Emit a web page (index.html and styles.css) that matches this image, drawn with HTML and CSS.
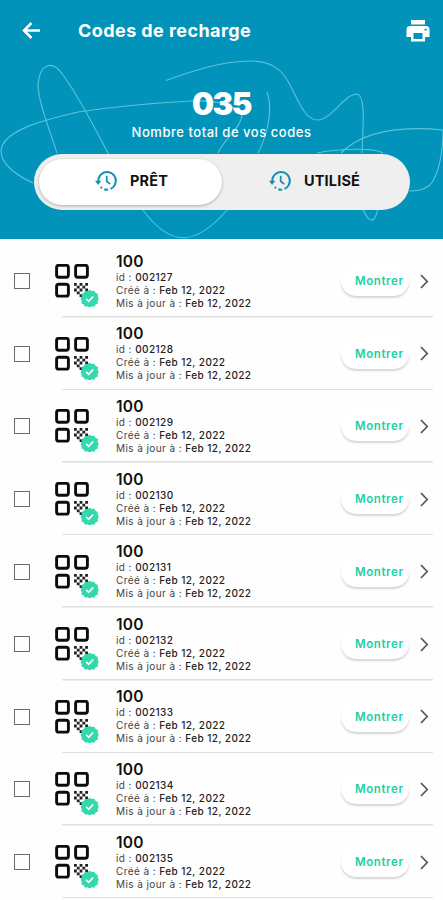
FILE: index.html
```
<!DOCTYPE html>
<html lang="fr">
<head>
<meta charset="utf-8">
<title>Codes de recharge</title>
<link rel="stylesheet" href="styles.css">
</head>
<body>
<svg class="defs" aria-hidden="true">
  <symbol id="history" viewBox="0 0 24 22">
    <path d="M3.400 12A9.200 9.200 0 1 1 6 17.800" fill="none" stroke="currentColor" stroke-width="2.100" stroke-dasharray="40 2.500 4 2.500 20"/>
    <path d="M0 11.200h6.600L3.200 15.600z" fill="currentColor"/>
    <path d="M12.200 6v5.800l3.600 3" fill="none" stroke="currentColor" stroke-width="1.800"/>
  </symbol>
  <symbol id="qr" viewBox="0 0 44 43">
    <g fill="none" stroke="#0c0c0c" stroke-width="2.900">
      <rect x="1.600" y="1.400" width="11.800" height="11.800" rx="2.200"/>
      <rect x="20.600" y="1.400" width="11.800" height="11.800" rx="2.200"/>
      <rect x="1.600" y="20.300" width="11.800" height="11.800" rx="2.200"/>
    </g>
    <path fill="#222" d="M19 19h2.800v2.800H19zM24.600 19h2.800v2.800h-2.800zM30.200 19H33v2.800h-2.800zM21.800 21.800h2.800v2.800h-2.800zM27.400 21.800h2.800v2.800h-2.800zM19 24.600h2.800v2.800H19zM24.600 24.600h2.800v2.800h-2.800zM30.200 24.600H33v2.800h-2.800zM21.800 27.400h2.800v2.800h-2.800zM24.600 30.200h2.800V33h-2.800z"/>
    <path fill="#34d8ad" d="M34.700 25.800l2.200 1.300 2.500-.4 1.200 2.200 2.300 1.100-.2 2.500 1.100 2.200-1.100 2.200.2 2.500-2.300 1.100-1.200 2.200-2.500-.4-2.200 1.300-2.200-1.300-2.500.4-1.200-2.200-2.300-1.100.2-2.500-1.100-2.200 1.100-2.200-.2-2.500 2.300-1.100 1.200-2.200 2.500.4z"/>
    <path d="M31.200 34.900l2.500 2.400 4.500-4.800" fill="none" stroke="#fff" stroke-width="1.700"/>
  </symbol>
  <symbol id="chevron" viewBox="0 0 9 15">
    <path d="M1 1l6.200 6.500L1 14" fill="none" stroke="#555" stroke-width="1.700"/>
  </symbol>
</svg>

<header class="header">
  <svg class="swirl" viewBox="0 0 443 239" aria-hidden="true">
    <path d="M166 80.500C192 71 222 61 250 61C270 61 281 68 289 83C300 104 305 119 317 120C332 120 344 94 357 94C366 96 363 125 362 153"/>
    <path d="M57 153C46 120 38 99 38 84C40 64 52 59 63 75C80 98 94 127 108 153C121 178 130 196 143 210C170 247 195 247 227 210"/>
    <path d="M33 183C13 174 1 162 1 151C2 128 57 117 78 112C118 106 155 103 191 101C220 100 236 105 242 116C240 129 224 139 218 153"/>
    <path d="M267 92C272 105 270 130 258 153"/>
    <path d="M317 153C335 149 374 147 383 153M341 153C360 134 392 125 443 130C443 151 439 175 430 185C422 191 415 191 409 191"/>
    <path d="M363 209C367 219 371 222 374 219Q377 214 378 209"/>
  </svg>
  <div class="bar">
    <svg class="back" viewBox="0 0 18 17"><path d="M9.500 1L2 8.500l7.500 7.500M2 8.500h16" fill="none" stroke="#fff" stroke-width="2.500"/></svg>
    <h1 class="title">Codes de recharge</h1>
    <svg class="printer" viewBox="0 0 24 22"><path fill="#fff" fill-rule="evenodd" d="M5 0h14v4.600H5zM4 6h16a3.500 3.500 0 0 1 3.500 3.500V17H19v4.500H5V17H.5V9.500A3.500 3.500 0 0 1 4 6zm3.500 7v6h9v-6zM18.500 8.800v1.800h2.200V8.800z"/></svg>
  </div>
  <div class="count">035</div>
  <div class="caption">Nombre total de vos codes</div>
  <nav class="tabs">
    <div class="tab active"><svg class="clock"><use href="#history"/></svg><span>PRÊT</span></div>
    <div class="tab"><svg class="clock"><use href="#history"/></svg><span>UTILISÉ</span></div>
  </nav>
</header>

<main class="list">
  <div class="row"><span class="check"></span><div class="item"><svg class="qr"><use href="#qr"/></svg><div class="info"><div class="amount">100</div><div class="line id">id : <b>002127</b></div><div class="line">Créé à : <b>Feb 12, 2022</b></div><div class="line">Mis à jour à : <b>Feb 12, 2022</b></div></div><span class="show">Montrer</span><svg class="chevron"><use href="#chevron"/></svg></div></div>
  <div class="row"><span class="check"></span><div class="item"><svg class="qr"><use href="#qr"/></svg><div class="info"><div class="amount">100</div><div class="line id">id : <b>002128</b></div><div class="line">Créé à : <b>Feb 12, 2022</b></div><div class="line">Mis à jour à : <b>Feb 12, 2022</b></div></div><span class="show">Montrer</span><svg class="chevron"><use href="#chevron"/></svg></div></div>
  <div class="row"><span class="check"></span><div class="item"><svg class="qr"><use href="#qr"/></svg><div class="info"><div class="amount">100</div><div class="line id">id : <b>002129</b></div><div class="line">Créé à : <b>Feb 12, 2022</b></div><div class="line">Mis à jour à : <b>Feb 12, 2022</b></div></div><span class="show">Montrer</span><svg class="chevron"><use href="#chevron"/></svg></div></div>
  <div class="row"><span class="check"></span><div class="item"><svg class="qr"><use href="#qr"/></svg><div class="info"><div class="amount">100</div><div class="line id">id : <b>002130</b></div><div class="line">Créé à : <b>Feb 12, 2022</b></div><div class="line">Mis à jour à : <b>Feb 12, 2022</b></div></div><span class="show">Montrer</span><svg class="chevron"><use href="#chevron"/></svg></div></div>
  <div class="row"><span class="check"></span><div class="item"><svg class="qr"><use href="#qr"/></svg><div class="info"><div class="amount">100</div><div class="line id">id : <b>002131</b></div><div class="line">Créé à : <b>Feb 12, 2022</b></div><div class="line">Mis à jour à : <b>Feb 12, 2022</b></div></div><span class="show">Montrer</span><svg class="chevron"><use href="#chevron"/></svg></div></div>
  <div class="row"><span class="check"></span><div class="item"><svg class="qr"><use href="#qr"/></svg><div class="info"><div class="amount">100</div><div class="line id">id : <b>002132</b></div><div class="line">Créé à : <b>Feb 12, 2022</b></div><div class="line">Mis à jour à : <b>Feb 12, 2022</b></div></div><span class="show">Montrer</span><svg class="chevron"><use href="#chevron"/></svg></div></div>
  <div class="row"><span class="check"></span><div class="item"><svg class="qr"><use href="#qr"/></svg><div class="info"><div class="amount">100</div><div class="line id">id : <b>002133</b></div><div class="line">Créé à : <b>Feb 12, 2022</b></div><div class="line">Mis à jour à : <b>Feb 12, 2022</b></div></div><span class="show">Montrer</span><svg class="chevron"><use href="#chevron"/></svg></div></div>
  <div class="row"><span class="check"></span><div class="item"><svg class="qr"><use href="#qr"/></svg><div class="info"><div class="amount">100</div><div class="line id">id : <b>002134</b></div><div class="line">Créé à : <b>Feb 12, 2022</b></div><div class="line">Mis à jour à : <b>Feb 12, 2022</b></div></div><span class="show">Montrer</span><svg class="chevron"><use href="#chevron"/></svg></div></div>
  <div class="row"><span class="check"></span><div class="item"><svg class="qr"><use href="#qr"/></svg><div class="info"><div class="amount">100</div><div class="line id">id : <b>002135</b></div><div class="line">Créé à : <b>Feb 12, 2022</b></div><div class="line">Mis à jour à : <b>Feb 12, 2022</b></div></div><span class="show">Montrer</span><svg class="chevron"><use href="#chevron"/></svg></div></div>
</main>
</body>
</html>
```
FILE: styles.css
```
* { box-sizing: border-box; }
body {
  margin: 0;
  height: 900px;
  overflow: hidden;
  background: #fefefe;
  color: #111;
  font-family: Inter, "Open Sans", sans-serif;
  white-space: nowrap;
}
svg { display: block; flex: none; }
.defs { position: absolute; width: 0; height: 0; }

.header {
  position: relative;
  height: 239px;
  background: #0293ba;
  color: #fff;
}
.header > :not(.swirl) { position: relative; }
.swirl {
  position: absolute;
  inset: 0;
  width: 443px;
  height: 239px;
  fill: none;
  stroke: #5cc2dc;
  stroke-width: 1.1;
}
.bar {
  display: flex;
  align-items: center;
  height: 61px;
  padding: 0 13px 0 22px;
}
.back { width: 18px; height: 17px; }
.title {
  flex: 1;
  margin: 0 0 0 38px;
  font-size: 18px;
  line-height: 24px;
  font-weight: 700;
  letter-spacing: 0.43px;
}
.printer { width: 24px; height: 22px; }
.count {
  margin-top: 24px;
  font-size: 31px;
  line-height: 38px;
  font-weight: 900;
  letter-spacing: -1.4px;
  text-align: center;
}
.caption {
  margin-top: 1px;
  font-size: 13px;
  line-height: 16px;
  font-weight: 500;
  letter-spacing: 0.53px;
  text-align: center;
}
.tabs {
  display: flex;
  width: 376px;
  height: 56px;
  margin: 13.500px 0 0 34px;
  padding: 5px;
  border-radius: 28px;
  background: #efefef;
}
.tab {
  display: flex;
  align-items: center;
  width: 183px;
  padding: 0 0 3px 56px;
  border-radius: 24px;
  color: #111;
  font-size: 14.500px;
  font-weight: 700;
  letter-spacing: 0.15px;
}
.tab + .tab { padding-left: 47px; }
.active {
  background: #fff;
  box-shadow: 0 1px 3px rgba(0, 0, 0, 0.28);
}
.clock { width: 23px; height: 21px; margin-right: 12px; color: #158fb8; }

.list { padding-top: 6px; }
.row {
  display: flex;
  align-items: center;
  height: 72.600px;
  padding: 0 11px 0 14px;
  background: linear-gradient(#e0e0e0, #e0e0e0) 62px 100% / 371px 1.500px no-repeat;
}
.check {
  width: 16px;
  height: 16px;
  border: 1.500px solid #6b6b6b;
}
.item {
  display: flex;
  align-items: center;
  flex: 1;
  padding-left: 25px;
}
.qr { width: 44px; height: 43px; margin-top: 9px; }
.info { width: 225px; margin-left: 17px; }
.amount {
  height: 18px;
  font-size: 15.500px;
  line-height: 18px;
  font-weight: 600;
  letter-spacing: 0.2px;
}
.line {
  height: 13px;
  font-size: 10px;
  line-height: 13px;
  letter-spacing: 0.42px;
  color: #444;
}
.line b { font-weight: 500; color: #222; }
.show {
  width: 68px;
  height: 30px;
  padding-left: 14px;
  border-radius: 15px;
  background: #fff;
  box-shadow: 0 2px 2px rgba(0, 0, 0, 0.16);
  color: #22cfa0;
  font-size: 11.500px;
  line-height: 31px;
  font-weight: 600;
  letter-spacing: 0.6px;
}
.chevron { width: 9px; height: 15px; margin-left: 11px; }
```
